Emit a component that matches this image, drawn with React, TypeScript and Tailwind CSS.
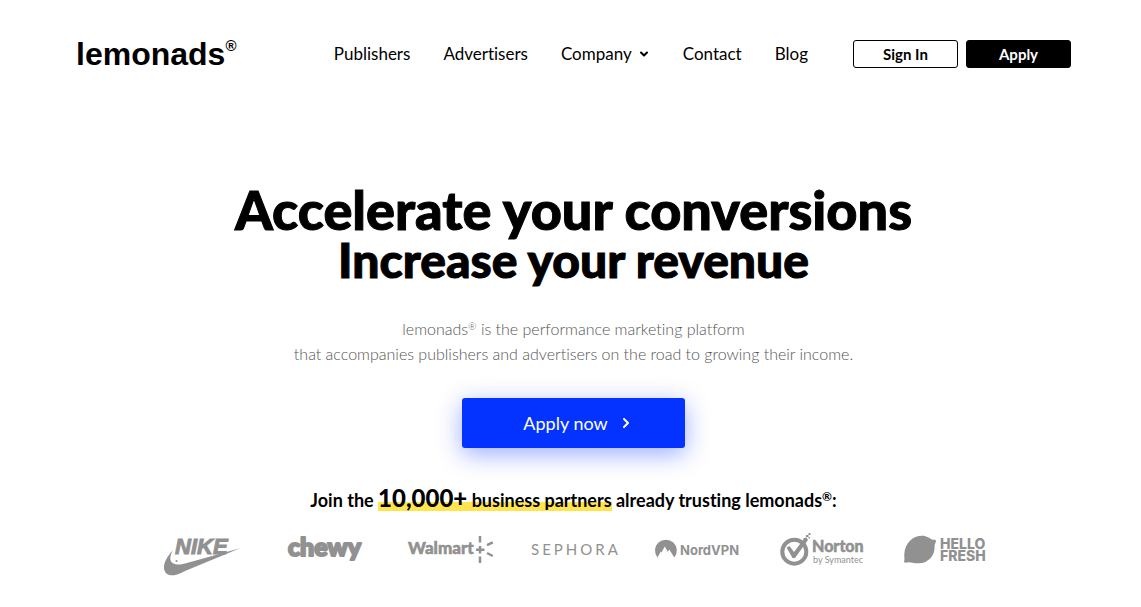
import type { ReactNode } from "react";
import { ChevronDown, ChevronRight } from "lucide-react";

const navLinks = [
  { label: "Publishers", href: "#publishers" },
  { label: "Advertisers", href: "#advertisers" },
  { label: "Company", href: "#company", hasMenu: true },
  { label: "Contact", href: "#contact" },
  { label: "Blog", href: "#blog" },
];

function PartnerLogo({ name, children }: { name: string; children: ReactNode }) {
  return (
    <li className="flex justify-center">
      <svg
        role="img"
        aria-label={name}
        viewBox="0 0 90 48"
        className="h-12 w-[90px] overflow-visible fill-[#919191]"
      >
        {children}
      </svg>
    </li>
  );
}

function Header() {
  return (
    <header className="flex items-center px-[70px] pt-10">
      <a href="#home" className="flex h-7 items-start font-['Liberation_Sans',sans-serif] font-bold">
        <span className="text-[32px] leading-7">lemonads</span>
        <span className="text-[15px] leading-3">®</span>
      </a>

      <nav className="ml-auto flex items-center gap-[33px] text-[17px] leading-7">
        {navLinks.map((link) => (
          <a key={link.label} href={link.href} className="flex items-center gap-1.5">
            {link.label}
            {link.hasMenu && <ChevronDown size={12} strokeWidth={4} />}
          </a>
        ))}
      </nav>

      <div className="ml-[45px] flex gap-2 text-[15px] font-bold">
        <button className="h-7 w-[105px] rounded-[3px] border border-black">Sign In</button>
        <button className="h-7 w-[105px] rounded-[3px] border border-black bg-black text-white">
          Apply
        </button>
      </div>
    </header>
  );
}

function Partners() {
  return (
    <ul className="mx-auto mt-3.5 grid max-w-[868px] grid-cols-7">
      <PartnerLogo name="Nike">
        <text
          x="18"
          y="24"
          strokeWidth="1"
          className="stroke-[#919191] font-['Liberation_Sans',sans-serif] text-[22px] font-bold italic"
        >
          NIKE
        </text>
        <path d="M15.5 20.5C10 27 7 32 7 37.500C7 43 11 46 17 45.200C20 44.800 24 43 28 41L83 18.200L29 33.200C21 35.300 15.500 34.800 13.800 31C12.600 28.200 13.800 24.200 15.500 20.500Z" />
        <circle cx="19.500" cy="31" r="1" />
      </PartnerLogo>

      <PartnerLogo name="Chewy">
        <text
          x="7"
          y="26"
          strokeWidth="2"
          strokeLinejoin="round"
          className="stroke-[#919191] text-[25px] font-black"
        >
          chewy
        </text>
      </PartnerLogo>

      <PartnerLogo name="Walmart+">
        <text x="3" y="24" strokeWidth="0.5" className="stroke-[#919191] text-[17px] font-black">
          Walmart
        </text>
        <path
          d="M75 6V12.500M75 26.500V33M75 16V23.500M71 19.800H79.500M82 15.200L87.800 12.300M82 23L87.800 26"
          strokeWidth="2.5"
          className="fill-none stroke-[#919191]"
        />
      </PartnerLogo>

      <PartnerLogo name="Sephora">
        <text x="2" y="25" className="text-[15px] tracking-[3px]">
          SEPHORA
        </text>
      </PartnerLogo>

      <PartnerLogo name="NordVPN">
        <path d="M4.500 27.500A10.900 10.900 0 1 1 21.300 27.500L16.300 19.500L15 21.500L15.500 23L11.800 16.500L8.500 22.500L7.800 21.500Z" />
        <text x="27" y="25" className="font-['Inter',sans-serif] text-[13px] font-bold">
          NordVPN
        </text>
      </PartnerLogo>

      <PartnerLogo name="Norton by Symantec">
        <circle cx="17.300" cy="21.700" r="12" strokeWidth="4" className="fill-none stroke-[#919191]" />
        <path d="M9.500 17.500L12.500 16L17 22L26 10L29 7L31 10L18 28H15.500Z" />
        <path d="M26.500 8H28.500V10H26.500ZM29 5H31.500V7H29ZM31.500 3H33.500V5H31.500ZM31.500 7H33V8.500H31.500Z" />
        <text x="35" y="22" strokeWidth="0.5" className="stroke-[#919191] text-[16px] font-black">
          Norton
        </text>
        <text x="36" y="33" className="text-[9px]">
          by Symantec
        </text>
      </PartnerLogo>

      <PartnerLogo name="HelloFresh">
        <path d="M3 31.500C4 29.500 3 27.500 3.300 24C4 13 12 5.800 21 5.800C26 5.800 28.500 8.500 31 9.500C32.500 10 34 9.200 34.800 10.200C35.600 12 33.500 13.500 33.600 16C34.200 26 27 33 18 33.300C12.500 33.500 10 32 7.500 32.200C5.500 32.400 3.500 33.500 3 31.500Z" />
        <text x="39" y="19" className="font-['Inter',sans-serif] text-[14px] font-extrabold">
          HELLO
        </text>
        <text x="39" y="31" className="font-['Inter',sans-serif] text-[14px] font-extrabold">
          FRESH
        </text>
      </PartnerLogo>
    </ul>
  );
}

export default function App() {
  return (
    <div className="min-h-screen bg-white pl-[6px] font-['Lato',sans-serif] text-black [font-variant-ligatures:none]">
      <Header />

      <main className="pt-[116px] text-center">
        <h1 className="font-black [-webkit-text-stroke:1px_black]">
          <span className="block text-[54px] leading-[52px]">Accelerate your conversions</span>
          <span className="block text-[48px] leading-[48px]">Increase your revenue</span>
        </h1>

        <p className="mt-8 text-[16px] leading-[25px] font-light text-[#555]">
          lemonads<sup className="text-[10px]">®</sup> is the performance marketing platform
          <br />
          that accompanies publishers and advertisers on the road to growing their income.
        </p>

        <button className="mt-8 inline-flex h-[50px] w-[223px] items-center justify-center gap-2.5 rounded-[3px] bg-[#0433ff] pl-2.5 text-[18px] text-white shadow-[0_6px_24px_rgba(4,51,255,0.4)]">
          Apply now
          <ChevronRight size={16} strokeWidth={3} />
        </button>

        <h2 className="mt-[34px] text-[18px] leading-8 font-bold">
          Join the{" "}
          <span className="bg-linear-to-t from-[#ffe44d] from-40% to-transparent to-40%">
            <span className="text-[24px] font-black">10,000+</span> business partners
          </span>{" "}
          already trusting lemonads<sup className="text-[12px]">®</sup>:
        </h2>

        <Partners />
      </main>
    </div>
  );
}
